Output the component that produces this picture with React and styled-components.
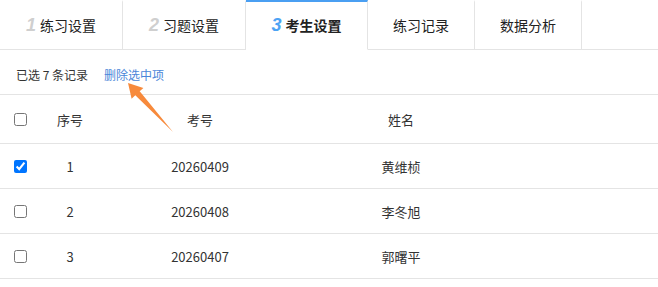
import { useState } from "react";
import styled, { createGlobalStyle } from "styled-components";

const GlobalStyle = createGlobalStyle`
  html, body {
    margin: 0;
    padding: 0;
    background: #fff;
  }
  body {
    font-family: "Noto Sans CJK SC", "Noto Sans", sans-serif;
    color: #333;
  }
`;

const Page = styled.div`
  position: relative;
  width: 658px;
  height: 287px;
  overflow: hidden;
  background: #fff;
`;

const TabBar = styled.div`
  display: flex;
  height: 50px;
`;

const Tab = styled.div`
  box-sizing: border-box;
  width: ${props => props.width}px;
  height: 50px;
  display: flex;
  align-items: center;
  justify-content: center;
  gap: 4px;
  border-right: 1px solid #e4e4e4;
  border-bottom: 1px solid ${props => (props.active ? "transparent" : "#e4e4e4")};
  border-top: 2px solid ${props => (props.active ? "#4a9ff2" : "transparent")};
  padding-bottom: 1px;
  font-size: 14px;
  font-weight: ${props => (props.active ? 700 : 400)};
  color: #222;
  cursor: pointer;
`;

const TabFill = styled.div`
  flex: 1;
  border-bottom: 1px solid #e4e4e4;
`;

const StepNo = styled.span`
  font-family: "Liberation Sans", Arial, sans-serif;
  font-style: italic;
  font-weight: 700;
  font-size: 18px;
  color: ${props => (props.active ? "#4da3f4" : "#cfcfcf")};
`;

const Toolbar = styled.div`
  display: flex;
  align-items: center;
  gap: 16px;
  height: 44px;
  box-sizing: border-box;
  padding: 16px 16px 10px;
  font-size: 12px;
  line-height: 18px;
  color: #333;
`;

const LinkButton = styled.a`
  color: #4a86d9;
  text-decoration: none;
  cursor: pointer;
`;

const Table = styled.div`
  border-top: 1px solid #e4e4e4;
`;

const Row = styled.div`
  display: grid;
  grid-template-columns: 40px 60px 200px 202px 1fr;
  align-items: center;
  height: ${props => (props.head ? 48 : 44)}px;
  border-bottom: 1px solid #e4e4e4;
  font-size: 13px;
  color: #333;
`;

const Cell = styled.div`
  text-align: center;
`;

const CheckCell = styled.div`
  display: flex;
  align-items: center;
  padding-left: 14px;
`;

const Check = styled.input`
  margin: 0;
  width: 13px;
  height: 13px;
`;

const Arrow = styled.svg`
  position: absolute;
  left: 120px;
  top: 78px;
  width: 60px;
  height: 60px;
  pointer-events: none;
`;

const tabs = [
  { no: 1, label: "练习设置", width: 123 },
  { no: 2, label: "习题设置", width: 123 },
  { no: 3, label: "考生设置", width: 122 },
  { label: "练习记录", width: 107 },
  { label: "数据分析", width: 107 },
];

const students = [
  { id: 1, code: "20260409", name: "黄维桢" },
  { id: 2, code: "20260408", name: "李冬旭" },
  { id: 3, code: "20260407", name: "郭曙平" },
];

export default function App() {
  const [checked, setChecked] = useState({ 1: true });

  const toggle = id => setChecked(c => ({ ...c, [id]: !c[id] }));

  return (
    <Page>
      <GlobalStyle />
      <TabBar>
        {tabs.map((t, i) => (
          <Tab key={t.label} width={t.width} active={i === 2}>
            {t.no && <StepNo active={i === 2}>{t.no}</StepNo>}
            {t.label}
          </Tab>
        ))}
        <TabFill />
      </TabBar>
      <Toolbar>
        <span>已选 7 条记录</span>
        <LinkButton>删除选中项</LinkButton>
      </Toolbar>
      <Table>
        <Row head>
          <CheckCell>
            <Check type="checkbox" />
          </CheckCell>
          <Cell>序号</Cell>
          <Cell>考号</Cell>
          <Cell>姓名</Cell>
          <Cell />
        </Row>
        {students.map(s => (
          <Row key={s.id}>
            <CheckCell>
              <Check type="checkbox" checked={!!checked[s.id]} onChange={() => toggle(s.id)} />
            </CheckCell>
            <Cell>{s.id}</Cell>
            <Cell>{s.code}</Cell>
            <Cell>{s.name}</Cell>
            <Cell />
          </Row>
        ))}
      </Table>
      <Arrow viewBox="120 78 60 60">
        <polygon
          points="128,83 143.4,87.9 139.7,91.3 173,132 135.3,95.3 131.6,98.7"
          fill="#f78a3c"
        />
      </Arrow>
    </Page>
  );
}
